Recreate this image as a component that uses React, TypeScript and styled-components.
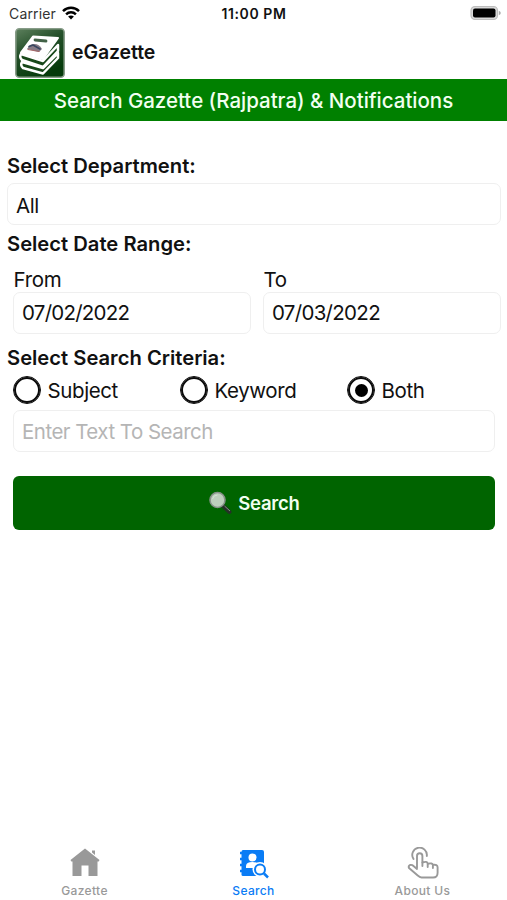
import React, { useState } from "react";
import styled, { createGlobalStyle } from "styled-components";

const GlobalStyle = createGlobalStyle`
  * { box-sizing: border-box; }
  html, body { margin: 0; padding: 0; background: #fff; }
  body { font-family: Inter, "Liberation Sans", sans-serif; color: #111; overflow: hidden; }
  button, input { font: inherit; margin: 0; }
`;

const Screen = styled.div`
  display: flex;
  flex-direction: column;
  width: 507px;
  height: 900px;
  background: #fff;
`;

const StatusBar = styled.div`
  display: grid;
  grid-template-columns: 1fr auto 1fr;
  align-items: center;
  height: 26px;
  padding: 1px 6px 0 9px;
`;

const Carrier = styled.div`
  display: flex;
  align-items: center;
  gap: 6px;
  color: #333;
  font-size: 14px;
  letter-spacing: 0.15px;
  svg { margin-top: -2px; }
`;

const Clock = styled.div`
  font-weight: 600;
  font-size: 14px;
  letter-spacing: 0.6px;
  margin-right: 2px;
`;

const BatterySlot = styled.div`
  display: flex;
  justify-content: flex-end;
  padding-bottom: 1px;
`;

const Header = styled.header`
  display: flex;
  align-items: center;
  gap: 7px;
  height: 53px;
  padding: 0 15px;
`;

const AppName = styled.h1`
  margin: 0;
  padding-bottom: 2px;
  font-size: 19.5px;
  font-weight: 600;
  letter-spacing: -0.1px;
`;

const Banner = styled.h2`
  display: flex;
  align-items: center;
  justify-content: center;
  height: 42px;
  margin: 0;
  padding-top: 1px;
  background: #008000;
  color: #f2fff0;
  font-size: 20.5px;
  font-weight: 500;
  letter-spacing: -0.02px;
`;

const Form = styled.form`
  display: flex;
  flex-direction: column;
  padding: 27px 6px 0 7px;
`;

const SectionLabel = styled.div<{ $height: number; $lower?: number }>`
  display: flex;
  align-items: center;
  height: ${(p) => p.$height}px;
  padding-top: ${(p) => p.$lower ?? 0}px;
  font-size: 20.2px;
  font-weight: 600;
`;

const Field = styled.input<{ $tracking?: number; $lower?: number }>`
  display: block;
  width: 100%;
  height: 42px;
  padding: ${(p) => p.$lower ?? 0}px 8px 0;
  border: 1px solid #efefef;
  border-radius: 7px;
  background: #fff;
  color: #111;
  font-size: 20.5px;
  letter-spacing: ${(p) => p.$tracking ?? 0}px;
  outline: none;
  &::placeholder { color: #b5b5b5; opacity: 1; }
`;

const DateField = styled(Field)`
  padding-bottom: 1px;
`;

const DateRow = styled.div`
  display: grid;
  grid-template-columns: 1fr 1fr;
  gap: 12px;
  padding: 6px 0 0 6px;
`;

const DateLabel = styled.label`
  display: flex;
  flex-direction: column;
  font-size: 20.5px;
  letter-spacing: -0.3px;
`;

const DateCaption = styled.span`
  height: 24px;
  line-height: 24px;
  padding-left: 0.5px;
`;

const Choices = styled.div`
  display: grid;
  grid-template-columns: repeat(3, 167px);
  height: 36px;
  padding-left: 7px;
`;

const Choice = styled.button`
  display: flex;
  align-items: center;
  gap: 7.5px;
  padding: 0 0 4px;
  border: 0;
  background: none;
  color: #111;
  font-size: 20.5px;
  letter-spacing: -0.4px;
`;

const Ring = styled.span<{ $checked: boolean }>`
  display: grid;
  place-items: center;
  width: 26px;
  height: 26px;
  border: 2.5px solid #0a0a0a;
  outline: 0.4px solid #0a0a0a;
  border-radius: 50%;
  &::after {
    content: "";
    width: 13px;
    height: 13px;
    border-radius: 50%;
    background: ${(p) => (p.$checked ? "#000" : "transparent")};
  }
`;

const Query = styled.div`
  padding: 0 6px;
`;

const Submit = styled.button`
  display: flex;
  align-items: center;
  justify-content: center;
  gap: 6px;
  height: 54px;
  margin: 24px 6px 0;
  padding: 0;
  border: 0;
  border-radius: 6px;
  background: #006400;
  color: #f2fff0;
  font-size: 18.5px;
  font-weight: 600;
  letter-spacing: -0.25px;
`;

const TabBar = styled.nav`
  display: grid;
  grid-template-columns: repeat(3, 1fr);
  height: 60px;
  margin-top: auto;
`;

const Tab = styled.button<{ $active?: boolean }>`
  display: flex;
  flex-direction: column;
  align-items: center;
  padding: 7px 0 0;
  border: 0;
  background: none;
  color: ${(p) => (p.$active ? "#0a7cf5" : "#999")};
  font-size: 12px;
  font-weight: 500;
  line-height: 16px;
  letter-spacing: 0.35px;
  svg { display: block; margin-bottom: 4px; }
`;

const WifiIcon = () => (
  <svg width="18" height="14" viewBox="0 0 18 14" fill="none" stroke="#000" strokeWidth="2.5">
    <path d="M1 5.1C5.5.7 12.5.7 17 5.1" />
    <path d="M4.1 8.3c2.7-2.6 7.1-2.6 9.8 0" />
    <path d="M9 13.5 6.1 10.6c1.6-1.5 4.2-1.5 5.8 0Z" fill="#000" stroke="none" />
  </svg>
);

const BatteryIcon = () => (
  <svg width="31" height="16" viewBox="0 0 31 16">
    <rect x="1" y="1.5" width="26.5" height="13" rx="4" fill="#d9d9d9" stroke="#bdbdbd" strokeWidth="1.2" />
    <rect x="3" y="3.5" width="22.5" height="9" rx="2" fill="#000" />
    <path d="M28.8 5.7v4.6q2-.8 2-2.3t-2-2.3Z" fill="#aaa" />
  </svg>
);

const BooksLogo = () => (
  <svg width="50" height="50" viewBox="0 0 50 50">
    <defs>
      <linearGradient id="logoGreen" x1="0" y1="0" x2="0.5" y2="1">
        <stop offset="0" stopColor="#5d805d" />
        <stop offset="0.45" stopColor="#25502a" />
        <stop offset="1" stopColor="#063b0b" />
      </linearGradient>
    </defs>
    <rect x="0.8" y="0.8" width="48.4" height="48.4" rx="3.5" fill="url(#logoGreen)" stroke="#879c88" strokeWidth="1.6" />
    <g strokeLinejoin="round" strokeLinecap="round">
      <path d="M7 34 28 40 43 25v5L28 45.5 8 40q-3-3-1-6Z" fill="#174719" stroke="#fff" strokeWidth="2.5" />
      <path d="M6 26 28 33 43 17v6L28 39 7 32q-3-3-1-6Z" fill="#174719" stroke="#fff" strokeWidth="2.5" />
      <path d="M18 8.5 43 10 28 31 6 24.5Z" fill="#fff" stroke="#fff" strokeWidth="2" />
      <path d="m20 12 11 1" stroke="#426247" strokeWidth="2.8" />
      <path d="m12 21 3-4q8-3 12 4l-3 3Z" fill="#877b86" />
      <path d="m14 18.500 4-1.500 7 4" stroke="#37465f" strokeWidth="1.6" fill="none" />
      <path d="m13 21.500 11 2" stroke="#a56868" strokeWidth="1.2" />
    </g>
  </svg>
);

const MagnifierIcon = () => (
  <svg width="24" height="24" viewBox="0 0 24 24">
    <path d="m15 15 6.5 6" stroke="#263128" strokeWidth="4" strokeLinecap="round" />
    <path d="m16.5 15 5.5 5" stroke="#829083" strokeWidth="1" />
    <circle cx="9.5" cy="9" r="7.5" fill="#bdcfbd" stroke="#879189" strokeWidth="1.6" />
    <path d="M4.5 8q1-4 5-4" stroke="#d5e2d5" strokeWidth="1" fill="none" />
  </svg>
);

const HouseIcon = () => (
  <svg width="32" height="32" viewBox="0 0 32 32" fill="currentColor">
    <path d="M16 1.5 30.5 13l-.8 1.500H28.5V29h-9V18.500h-7V29h-9V14.500H2.300L1.500 13Z" />
    <path d="M23 3.500h3v4.500l-3-2.500Z" />
  </svg>
);

const DirectoryIcon = () => (
  <svg width="32" height="32" viewBox="0 0 32 32">
    <path d="M5 3h19q2 0 2 2v24H5q-1.5 0-1.5-1.5V5Q3.5 3 5 3Z" fill="currentColor" />
    <g stroke="currentColor" strokeWidth="2.5"><path d="M2 6h4M2 12h4M2 18h4M2 24h4" /></g>
    <circle cx="14.5" cy="10.5" r="4" fill="#fff" />
    <path d="M8 21v-2q0-4 6.5-4t6.5 4v2Z" fill="#fff" />
    <circle cx="22" cy="22.5" r="7.5" fill="#fff" />
    <circle cx="22" cy="22.5" r="5" fill="#fff" stroke="currentColor" strokeWidth="2" />
    <path d="m26 26.5 4 4" stroke="currentColor" strokeWidth="2.5" />
  </svg>
);

const TapIcon = () => (
  <svg width="32" height="32" viewBox="0 0 32 32" fill="none" stroke="currentColor" strokeWidth="1.9" strokeLinecap="round" strokeLinejoin="round">
    <path d="M6.5 12A7.3 7.3 0 1 1 19.800 9" />
    <path d="M10 21V9a2.700 2.700 0 0 1 5.400 0v6.500q4.800-1.800 5.300 1.200 4.800-1 5.200 1.200 4.700-.8 4.700 2.300v5.500q0 4.800-4.500 4.800H14.500q-2 0-3.500-1.800L2 21q-1-2 1-3 2-.5 3.500 1l3.500 3" />
    <path d="M15.400 15.500v3.500M20.700 17v3M25.900 18v3" />
  </svg>
);

const criteria = ["Subject", "Keyword", "Both"];

export default function App() {
  const [selected, setSelected] = useState("Both");
  return (
    <>
      <GlobalStyle />
      <Screen>
        <StatusBar>
          <Carrier>Carrier <WifiIcon /></Carrier>
          <Clock>11:00 PM</Clock>
          <BatterySlot><BatteryIcon /></BatterySlot>
        </StatusBar>
        <Header><BooksLogo /><AppName>eGazette</AppName></Header>
        <Banner>Search Gazette (Rajpatra) &amp; Notifications</Banner>
        <Form onSubmit={(e) => e.preventDefault()}>
          <SectionLabel $height={35}>Select Department:</SectionLabel>
          <Field defaultValue="All" $tracking={-0.4} $lower={2} />
          <SectionLabel $height={37}>Select Date Range:</SectionLabel>
          <DateRow>
            <DateLabel><DateCaption>From</DateCaption><DateField defaultValue="07/02/2022" $tracking={-0.75} /></DateLabel>
            <DateLabel><DateCaption>To</DateCaption><DateField defaultValue="07/03/2022" $tracking={-0.7} /></DateLabel>
          </DateRow>
          <SectionLabel $height={40} $lower={7}>Select Search Criteria:</SectionLabel>
          <Choices>
            {criteria.map((name) => (
              <Choice key={name} type="button" onClick={() => setSelected(name)}>
                <Ring $checked={selected === name} />{name}
              </Choice>
            ))}
          </Choices>
          <Query><Field placeholder="Enter Text To Search" $tracking={-0.52} $lower={1} /></Query>
          <Submit><MagnifierIcon />Search</Submit>
        </Form>
        <TabBar>
          <Tab><HouseIcon />Gazette</Tab>
          <Tab $active><DirectoryIcon />Search</Tab>
          <Tab><TapIcon />About Us</Tab>
        </TabBar>
      </Screen>
    </>
  );
}
